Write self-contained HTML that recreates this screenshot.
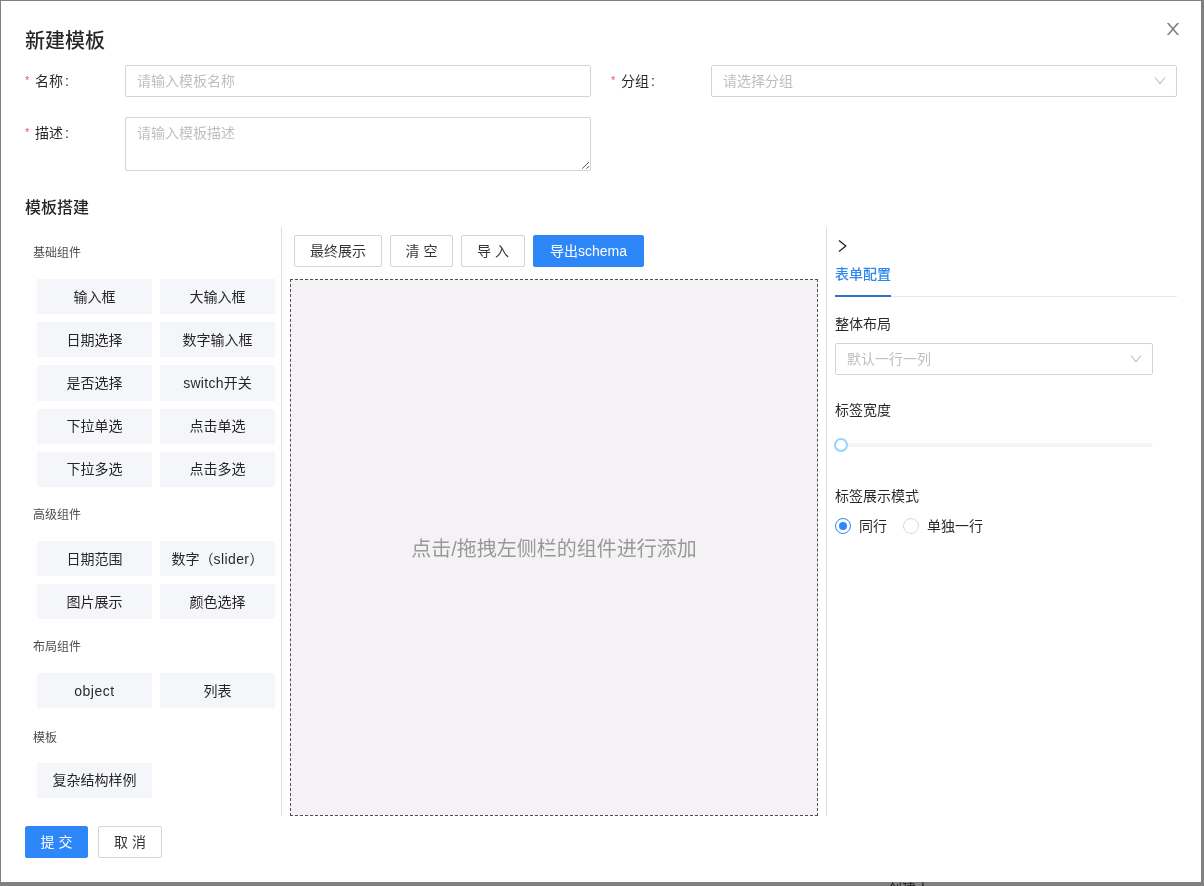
<!DOCTYPE html>
<html lang="zh-CN">
<head>
<meta charset="utf-8">
<title>新建模板</title>
<style>
*{box-sizing:border-box;margin:0;padding:0}
html,body{width:1204px;height:886px;overflow:hidden}
body{background:#808080;font-family:"Liberation Sans","Noto Sans CJK SC",sans-serif;font-size:14px;color:rgba(0,0,0,.85);position:relative}
.abs{position:absolute}
#modal{will-change:transform;position:absolute;left:1px;top:1px;width:1200px;height:881px;background:#fff}
#under{will-change:transform;position:absolute;left:888px;top:881px;font-size:14px;color:#222;white-space:nowrap;line-height:16px}
.title{left:24px;top:26px;font-size:20px;font-weight:500;line-height:28px;color:rgba(0,0,0,.85)}
.close{left:1166px;top:22px;width:12px;height:12px}
.lbl{font-size:14px;line-height:32px;height:32px;white-space:nowrap;color:rgba(0,0,0,.85)}
.lbl i{font-style:normal;color:#f5222d;opacity:.8;font-family:"Liberation Sans",sans-serif;font-size:11px;display:inline-block;width:10px;position:relative;top:-2px}
.lbl b{font-weight:400;margin-left:2px}
.inp{border:1px solid #d4d4d4;border-radius:2px;background:#fff;color:#bfbfbf;font-size:14px;line-height:30px;padding:0 11px;white-space:nowrap}
.h2{left:24px;top:195px;font-size:16px;font-weight:500;line-height:24px;color:rgba(0,0,0,.85)}
.grp{font-size:12px;line-height:20px;color:rgba(0,0,0,.72);left:32px}
.tile{width:115px;height:35px;background:#f5f6fa;text-align:center;line-height:36px;font-size:14px;color:rgba(0,0,0,.85);white-space:nowrap}
.c1{left:36px}.c2{left:159px}
.vline{width:1px;background:#dedede}
.btn{height:32px;border:1px solid #d4d4d4;border-radius:2px;background:#fff;text-align:center;line-height:30px;font-size:14px;color:rgba(0,0,0,.8);white-space:nowrap}
.btn.pri{background:#2d87f9;border-color:#2d87f9;color:#fff}
.canvas{left:289px;top:278px;width:528px;height:537px;background:#f4f2f5;border:1px dashed #505050}
.canvas span{position:absolute;left:0;right:0;top:254px;text-align:center;font-size:20px;line-height:30px;color:#999}
.rl{left:834px;font-size:14px;line-height:22px;color:rgba(0,0,0,.85);white-space:nowrap}
.radio{width:16px;height:16px;border-radius:50%;border:1px solid #d9d9d9;background:#fff}
.radio.on{border-color:#2d87f9}
.radio.on::after{content:"";position:absolute;left:3px;top:3px;width:8px;height:8px;border-radius:50%;background:#2d87f9}
</style>
</head>
<body>
<div id="under">创建人<span style="margin-left:2px">:</span></div>
<div id="modal">
  <div class="abs title">新建模板</div>
  <svg class="abs close" viewBox="196 186 632 652" preserveAspectRatio="none"><path fill="rgba(0,0,0,.5)" d="M563.8 512l262.5-312.900c4.400-5.200.700-13.100-6.100-13.100h-79.800c-4.700 0-9.200 2.100-12.300 5.700L511.600 449.800 295.100 191.700c-3-3.600-7.500-5.700-12.300-5.700H203c-6.800 0-10.500 7.900-6.100 13.100L459.400 512 196.900 824.900A7.950 7.950 0 0 0 203 838h79.800c4.700 0 9.200-2.100 12.300-5.700l216.500-258.100 216.500 258.100c3 3.600 7.500 5.700 12.300 5.700h79.800c6.800 0 10.500-7.900 6.100-13.100L563.800 512z"/></svg>

  <div class="abs lbl" style="left:24px;top:64px"><i>*</i>名称<b>:</b></div>
  <div class="abs inp" style="left:124px;top:64px;width:466px;height:32px">请输入模板名称</div>
  <div class="abs lbl" style="left:610px;top:64px"><i>*</i>分组<b>:</b></div>
  <div class="abs inp" style="left:710px;top:64px;width:466px;height:32px">请选择分组</div>
  <svg class="abs" style="left:1153px;top:75px;width:12px;height:10px" viewBox="0 0 12 10"><path d="M1 1.5 L6 7.7 L11 1.5" stroke="#bfbfbf" stroke-width="1.1" fill="none"/></svg>

  <div class="abs lbl" style="left:24px;top:116px"><i>*</i>描述<b>:</b></div>
  <div class="abs inp" style="left:124px;top:116px;width:466px;height:54px;line-height:22px;padding-top:4px">请输入模板描述</div>
  <svg class="abs" style="left:578px;top:158px;width:10px;height:10px" viewBox="0 0 10 10"><path d="M10 3 L3.2 9.6 M10 7.2 L7.400 9.600" stroke="#555" stroke-width="1" fill="none"/></svg>

  <div class="abs h2">模板搭建</div>

  <!-- left panel -->
  <div class="abs grp" style="top:242px">基础组件</div>
  <div class="abs tile c1" style="top:278px">输入框</div><div class="abs tile c2" style="top:278px">大输入框</div>
  <div class="abs tile c1" style="top:321px">日期选择</div><div class="abs tile c2" style="top:321px">数字输入框</div>
  <div class="abs tile c1" style="top:364px;height:36px">是否选择</div><div class="abs tile c2" style="top:364px;height:36px"><span style="letter-spacing:.3px">switch</span>开关</div>
  <div class="abs tile c1" style="top:408px;line-height:34px">下拉单选</div><div class="abs tile c2" style="top:408px;line-height:34px">点击单选</div>
  <div class="abs tile c1" style="top:451px;line-height:34px">下拉多选</div><div class="abs tile c2" style="top:451px;line-height:34px">点击多选</div>
  <div class="abs grp" style="top:504px">高级组件</div>
  <div class="abs tile c1" style="top:540px">日期范围</div><div class="abs tile c2" style="top:540px">数字（<span style="letter-spacing:.4px">slider</span>）</div>
  <div class="abs tile c1" style="top:583px">图片展示</div><div class="abs tile c2" style="top:583px">颜色选择</div>
  <div class="abs grp" style="top:636px">布局组件</div>
  <div class="abs tile c1" style="top:672px"><span style="letter-spacing:.55px">object</span></div><div class="abs tile c2" style="top:672px">列表</div>
  <div class="abs grp" style="top:727px">模板</div>
  <div class="abs tile c1" style="top:762px;line-height:34px">复杂结构样例</div>
  <div class="abs vline" style="left:280px;top:226px;height:589px"></div>

  <!-- center -->
  <div class="abs btn" style="left:293px;top:234px;width:88px">最终展示</div>
  <div class="abs btn" style="left:389px;top:234px;width:63px">清 空</div>
  <div class="abs btn" style="left:460px;top:234px;width:64px">导 入</div>
  <div class="abs btn pri" style="left:532px;top:234px;width:111px">导出schema</div>
  <div class="abs canvas"><span>点击/拖拽左侧栏的组件进行添加</span></div>

  <!-- right -->
  <div class="abs vline" style="left:825px;top:226px;height:589px"></div>
  <svg class="abs" style="left:835px;top:238px;width:12px;height:14px" viewBox="0 0 12 14"><path d="M3 1.6 L9.800 7 L3 12.400" stroke="#222" stroke-width="1.300" fill="none"/></svg>
  <div class="abs rl" style="top:262px;color:#2d87f0;font-weight:500">表单配置</div>
  <div class="abs" style="left:834px;top:295px;width:342px;height:1px;background:#e8e8e8"></div>
  <div class="abs" style="left:834px;top:294px;width:56px;height:2px;background:#2f74c8"></div>
  <div class="abs rl" style="top:312px">整体布局</div>
  <div class="abs inp" style="left:834px;top:342px;width:318px;height:32px">默认一行一列</div>
  <svg class="abs" style="left:1129px;top:353px;width:12px;height:10px" viewBox="0 0 12 10"><path d="M1 1.5 L6 7.7 L11 1.5" stroke="#bfbfbf" stroke-width="1.1" fill="none"/></svg>
  <div class="abs rl" style="top:398px">标签宽度</div>
  <div class="abs" style="left:834px;top:442px;width:318px;height:4px;border-radius:2px;background:#f5f5f5"></div>
  <div class="abs" style="left:833px;top:437px;width:14px;height:14px;border-radius:50%;border:2px solid #91d5ff;background:#fff"></div>
  <div class="abs rl" style="top:484px">标签展示模式</div>
  <div class="abs radio on" style="left:834px;top:517px"></div>
  <div class="abs rl" style="left:858px;top:514px">同行</div>
  <div class="abs radio" style="left:902px;top:517px"></div>
  <div class="abs rl" style="left:926px;top:514px">单独一行</div>

  <!-- footer -->
  <div class="abs btn pri" style="left:24px;top:825px;width:63px">提 交</div>
  <div class="abs btn" style="left:97px;top:825px;width:64px">取 消</div>
</div>
</body>
</html>
